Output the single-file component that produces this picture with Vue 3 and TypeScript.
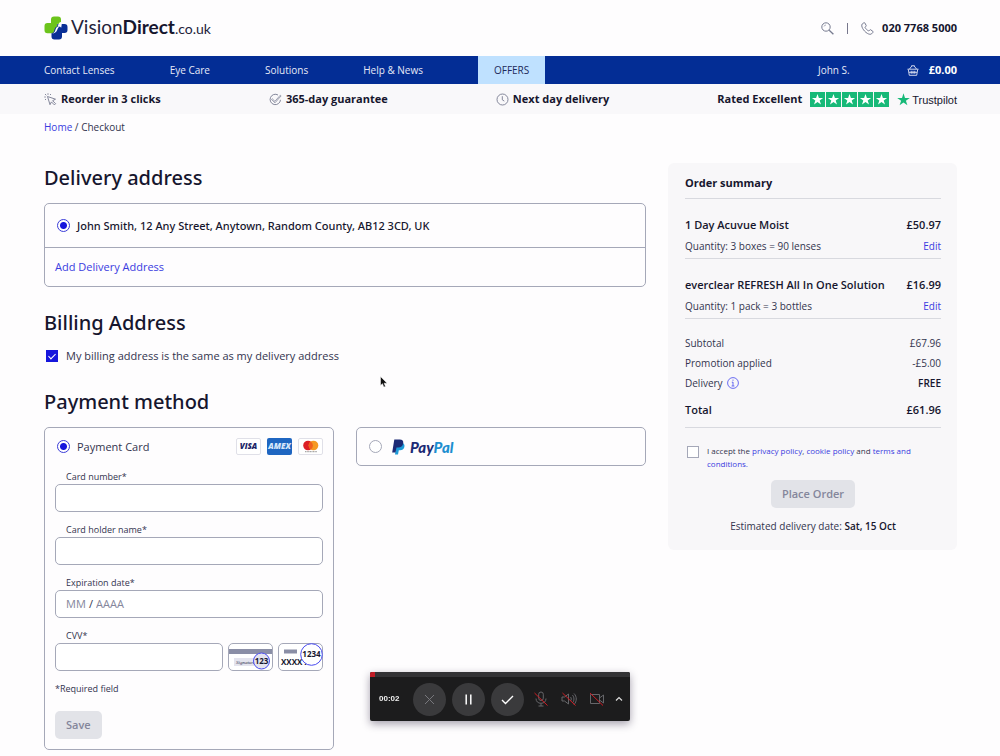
<script setup lang="ts">
import { ref } from 'vue'

interface BasketItem {
  name: string
  price: string
  quantity: string
}

const navLinks: string[] = ['Contact Lenses', 'Eye Care', 'Solutions', 'Help & News']

const items: BasketItem[] = [
  { name: '1 Day Acuvue Moist', price: '£50.97', quantity: '3 boxes = 90 lenses' },
  { name: 'everclear REFRESH All In One Solution', price: '£16.99', quantity: '1 pack = 3 bottles' },
]

const address = ref('home')
const sameAddress = ref(true)
const method = ref('card')
const accepted = ref(false)
const cardNumber = ref('')
const cardHolder = ref('')
const month = ref('')
const year = ref('')
const cvv = ref('')
</script>

<template>
  <div class="page">
    <header class="top wrap">
      <a href="#" class="logo" aria-label="VisionDirect.co.uk">
        <svg width="24" height="24" viewBox="0 0 24 24" aria-hidden="true">
          <path d="M12 8h8.500a3 3 0 0 1 3 3v3a3 3 0 0 1-3 3H18v3.500a3 3 0 0 1-3 3h-4.500a3 3 0 0 1-3-3V17z" fill="#0a2f96" />
          <path d="M7 3.500a3 3 0 0 1 3-3h4a3 3 0 0 1 3 3V6c-1.500.3-2.200 1-2.400 2.300L13 7.800l.4 2.400c-2 .6-2.800 2.200-3.200 4.500-.3 1.600-1.300 2.500-3 2.500H3.500a3 3 0 0 1-3-3V10a3 3 0 0 1 3-3H7z" fill="#6cc41c" />
          <path d="M6.500 17.700c2.900-.2 4.400-1.500 4.900-3.800.5-2.200 1.500-3.400 3.200-3.700l-1.200-1.500 4.500-1.500-.7 4.500-1.300-1.100c-1.400.4-2.200 1.700-2.700 3.400-.7 2.300-3 3.700-6.700 3.700z" fill="#fff" />
        </svg>
        <span class="logo-text">Vision<b>Direct</b><small>.co.uk</small></span>
      </a>
      <div class="contact">
        <button type="button" class="plain" aria-label="Search">
          <svg width="13" height="13" viewBox="0 0 13 13" fill="none" stroke="#777b90">
            <circle cx="5" cy="5" r="4.200" />
            <path d="M8.200 8.200l4.200 4" stroke-width="1.300" />
            <path d="M3 4.500A2 2 0 0 1 5 3" stroke-width=".6" />
          </svg>
        </button>
        <span class="rule"></span>
        <a href="#" class="phone">
          <svg width="13" height="13" viewBox="0 0 13 13" fill="none" stroke="#777b90" stroke-linejoin="round" aria-hidden="true">
            <path d="M2.800.8L1.200 2c-.8.900-.5 2.700.5 4.500s2.700 3.800 4.700 4.900c1.700 1 3.400 1.200 4.200.4l1.400-1.500c.2-.3.200-.6-.1-.9L9.700 7.800c-.3-.2-.6-.2-.9.100L7.700 9C6.200 8.300 4.700 6.800 4 5.300l1-1.100c.3-.3.300-.6.100-.9L3.700.8c-.2-.3-.6-.3-.9 0z" />
          </svg>
          020 7768 5000
        </a>
      </div>
    </header>

    <nav class="nav">
      <div class="wrap nav-row">
        <a v-for="link in navLinks" :key="link" href="#">{{ link }}</a>
        <a href="#" class="offers">OFFERS</a>
        <a href="#" class="user">John S.</a>
        <a href="#" class="basket">
          <svg width="12" height="11" viewBox="0 0 12 11" fill="none" stroke="#e3e6f5" stroke-width=".9" aria-hidden="true">
            <path d="M.5 4.200h11M1.300 4.500l1 5.800h7.400l1-5.800M2.500 4L5 .8M9.500 4L7 .8M4.300.8h3.400M4.200 5.800v3M6 5.800v3M7.800 5.800v3M2 7.300h8" />
          </svg>
          £0.00
        </a>
      </div>
    </nav>

    <div class="benefits">
      <div class="wrap benefit-row">
        <span class="benefit">
          <svg width="13" height="13" viewBox="0 0 13 13" fill="none" stroke="#777b90" stroke-width=".9" stroke-linejoin="round" aria-hidden="true">
            <path d="M3.500 3.500l8 2.700-2.900 1.500 3 3-1.200 1.200-3-3L6 11.700z" />
            <path d="M2.300 2.300L1 1M4 1.800V.3M1.800 4H.3M2 6L1 7M6 2l1-1" />
          </svg>
          Reorder in 3 clicks
        </span>
        <span class="benefit">
          <svg width="13" height="13" viewBox="0 0 13 13" fill="none" stroke="#777b90" stroke-width=".9" aria-hidden="true">
            <path d="M11.500 6.800A5.200 5.200 0 1 1 9 2" />
            <path d="M3.200 5.700l2.700 2.600 5.400-6.100.8.700L6 9.800 2.500 6.500z" stroke-width=".7" />
          </svg>
          365-day guarantee
        </span>
        <span class="benefit">
          <svg width="13" height="13" viewBox="0 0 13 13" fill="none" stroke="#777b90" stroke-width=".9" aria-hidden="true">
            <circle cx="6.500" cy="6.500" r="5.500" />
            <path d="M6.300 3.200v3.600l2 1.300" />
          </svg>
          Next day delivery
        </span>
        <span class="benefit rated">
          Rated Excellent
          <span class="stars">
            <svg v-for="n in 5" :key="n" width="15" height="15" viewBox="0 0 15 15" aria-hidden="true">
              <path d="M0 0h15v15H0z" fill="#17b978" />
              <path d="M7.500 2l1.400 4h4.200L9.700 8.500l1.300 4.100-3.500-2.500L4 12.600l1.300-4.100L1.900 6h4.200z" fill="#fff" />
            </svg>
          </span>
          <span class="trust">
            <svg width="13" height="13" viewBox="0 0 13 13" aria-hidden="true">
              <path d="M6.500.3L8 4.900h4.800L8.900 7.700l1.500 4.600-3.900-2.800-3.900 2.800 1.500-4.600L.2 4.900H5z" fill="#17b978" />
            </svg>
            <span>Trustpilot</span>
          </span>
        </span>
      </div>
    </div>

    <div class="wrap crumbs"><a href="#">Home</a> / Checkout</div>

    <main class="wrap layout">
      <div class="left">
        <h2>Delivery address</h2>
        <div class="box">
          <label class="choice address">
            <input v-model="address" type="radio" name="address" value="home" />
            John Smith, 12 Any Street, Anytown, Random County, AB12 3CD, UK
          </label>
          <div class="add"><a href="#">Add Delivery Address</a></div>
        </div>

        <h2>Billing Address</h2>
        <label class="same">
          <input v-model="sameAddress" type="checkbox" />
          My billing address is the same as my delivery address
        </label>

        <h2>Payment method</h2>
        <div class="methods">
          <div class="box">
            <div class="method-head">
              <label class="choice">
                <input v-model="method" type="radio" name="method" value="card" />
                Payment Card
              </label>
              <span class="brands">
                <svg width="25" height="17" viewBox="0 0 25 17" role="img" aria-label="Visa">
                  <rect x=".5" y=".5" width="24" height="16" rx="1.500" fill="#fff" stroke="#e0e0e8" />
                  <text x="12.500" y="11" text-anchor="middle" class="visa">VISA</text>
                </svg>
                <svg width="25" height="17" viewBox="0 0 25 17" role="img" aria-label="Amex">
                  <rect width="25" height="17" rx="2" fill="#1f66c1" />
                  <text x="12.500" y="11" text-anchor="middle" class="amex">AMEX</text>
                </svg>
                <svg width="25" height="17" viewBox="0 0 25 17" role="img" aria-label="Mastercard">
                  <rect x=".5" y=".5" width="24" height="16" rx="1.500" fill="#fff" stroke="#e0e0e8" />
                  <circle cx="10" cy="7.500" r="4.800" fill="#dc1f26" />
                  <circle cx="15.500" cy="7.500" r="4.800" fill="#f59a23" />
                  <path d="M12.750 3.500a4.800 4.800 0 0 1 0 8 4.800 4.800 0 0 1 0-8z" fill="#f0601f" />
                  <path d="M7 13.700h12" stroke="#777" stroke-width=".8" stroke-dasharray="1.200 .4" />
                </svg>
              </span>
            </div>
            <form class="card-form" @submit.prevent>
              <label for="number">Card number*</label>
              <input id="number" v-model="cardNumber" class="field" type="text" />
              <label for="holder">Card holder name*</label>
              <input id="holder" v-model="cardHolder" class="field" type="text" />
              <label for="month">Expiration date*</label>
              <div class="field expiry">
                <input id="month" v-model="month" class="month" type="text" placeholder="MM" />
                <span>/</span>
                <input v-model="year" class="year" type="text" placeholder="AAAA" aria-label="Expiration year" />
              </div>
              <label for="cvv">CVV*</label>
              <div class="cvv-row">
                <input id="cvv" v-model="cvv" class="field" type="text" />
                <svg width="45" height="28" viewBox="0 0 45 28" aria-hidden="true">
                  <rect x=".5" y=".5" width="44" height="27" rx="4.500" fill="#fff" stroke="#a5a8b8" />
                  <path d="M1 6h43v5H1z" fill="#8a8ea6" />
                  <path d="M6 15h20v8H6z" fill="#e4e4ee" />
                  <text x="8" y="21" class="sign">Signature</text>
                  <circle cx="33.500" cy="18" r="8" fill="#e4e4ee" stroke="#4a4cf0" />
                  <text x="33.500" y="21" text-anchor="middle" class="digits">123</text>
                </svg>
                <svg width="45" height="28" viewBox="0 0 45 28" aria-hidden="true">
                  <rect x=".5" y=".5" width="44" height="27" rx="4.500" fill="#fff" stroke="#a5a8b8" />
                  <path d="M6 6.500h13v4H6z" fill="#8a8ea6" />
                  <text x="3" y="22" class="digits">XXXX X</text>
                  <circle cx="33.500" cy="11.500" r="10.800" fill="#fff" stroke="#4a4cf0" />
                  <text x="33.500" y="14" text-anchor="middle" class="digits">1234</text>
                </svg>
              </div>
              <p class="required">*Required field</p>
              <button type="submit" class="btn save">Save</button>
            </form>
          </div>

          <div class="box">
            <div class="method-head">
              <label class="choice paypal">
                <input v-model="method" type="radio" name="method" value="paypal" />
                <svg width="13" height="16" viewBox="0 0 13 16" aria-hidden="true">
                  <path d="M4.500 4h6.300c1.500.9 2 2.300 1.500 4.200-.5 2-2 3-4.200 3H6.800L6 15.500H3z" fill="#1d9bd8" />
                  <path d="M2.300.5h5.400c2.700 0 4 1.500 3.500 4-.5 2.600-2.300 3.900-5 3.900H4.500l-1 5.100H.2z" fill="#1c2a75" />
                </svg>
                <span class="paypal-text">Pay<em>Pal</em></span>
              </label>
            </div>
          </div>
        </div>
      </div>

      <aside class="summary">
        <h3>Order summary</h3>
        <section v-for="item in items" :key="item.name" class="item">
          <div class="line strong"><span>{{ item.name }}</span><span>{{ item.price }}</span></div>
          <div class="line qty"><span>Quantity: {{ item.quantity }}</span><a href="#">Edit</a></div>
        </section>
        <dl class="totals">
          <div class="line"><dt>Subtotal</dt><dd>£67.96</dd></div>
          <div class="line"><dt>Promotion applied</dt><dd>-£5.00</dd></div>
          <div class="line">
            <dt class="delivery">
              Delivery
              <svg width="12" height="12" viewBox="0 0 12 12" fill="none" stroke="#5a5cf0" stroke-width=".9" aria-hidden="true">
                <circle cx="6" cy="6" r="5.400" />
                <path d="M6 5v4M4.800 5.200H6M4.600 9h2.800M6 2.600v1.200" />
              </svg>
            </dt>
            <dd class="free">FREE</dd>
          </div>
          <div class="line strong total"><dt>Total</dt><dd>£61.96</dd></div>
        </dl>
        <div class="terms">
          <input id="terms" v-model="accepted" type="checkbox" />
          <label for="terms">I accept the <a href="#">privacy policy</a>, <a href="#">cookie policy</a> and <a href="#">terms and conditions.</a></label>
        </div>
        <button type="button" class="btn order">Place Order</button>
        <p class="estimate">Estimated delivery date: <b>Sat, 15 Oct</b></p>
      </aside>
    </main>

    <svg class="cursor" width="8" height="12" viewBox="0 0 8 12" aria-hidden="true">
      <path d="M.5.500v9l2-1.800 1.300 3.400 1.700-.7-1.400-3.200h3z" fill="#111" stroke="#fff" stroke-width=".5" />
    </svg>

    <div class="recorder">
      <div class="progress"><span></span></div>
      <div class="controls">
        <span class="time">00:02</span>
        <button type="button" class="round" aria-label="Cancel">
          <svg width="13" height="13" viewBox="0 0 13 13" fill="none" stroke="#77777c"><path d="M2 2l9 9M11 2l-9 9" /></svg>
        </button>
        <button type="button" class="round" aria-label="Pause">
          <svg width="13" height="13" viewBox="0 0 13 13" stroke="#fff" stroke-width="1.500"><path d="M4.200 1.500v10M8.800 1.500v10" /></svg>
        </button>
        <button type="button" class="round" aria-label="Finish">
          <svg width="13" height="13" viewBox="0 0 13 13" fill="none" stroke="#fff" stroke-width="1.400"><path d="M1 7l3.500 3.500L12 3" /></svg>
        </button>
        <button type="button" class="plain tool mic" aria-label="Microphone">
          <svg width="16" height="16" viewBox="0 0 16 16" fill="none" stroke="#66666a">
            <rect x="5.700" y="1" width="4.600" height="8.500" rx="2.300" />
            <path d="M3 7.500c0 3 2 4.800 5 4.800s5-1.800 5-4.800M8 12.500V15M5.500 15h5" />
            <path d="M1.500 2l13 12.500" stroke="#d01c24" />
          </svg>
        </button>
        <button type="button" class="plain tool" aria-label="Sound">
          <svg width="16" height="16" viewBox="0 0 16 16" fill="none" stroke="#66666a">
            <path d="M1 6h2.500L7.500 3v10L3.500 10H1zM9.500 6c1 1 1 3 0 4M11.300 4c2.200 2 2.200 6 0 8M13 2.500c3 3 3 8 0 11" />
            <path d="M1.500 2l13 12.500" stroke="#d01c24" />
          </svg>
        </button>
        <button type="button" class="plain camera" aria-label="Camera">
          <svg width="16" height="16" viewBox="0 0 16 16" fill="none" stroke="#66666a">
            <path d="M1.500 3.500h9v9h-9zM10.500 7l4-3v8l-4-3" />
            <path d="M1 2l13 12.500" stroke="#d01c24" />
          </svg>
        </button>
        <button type="button" class="plain" aria-label="Expand">
          <svg width="8" height="8" viewBox="0 0 8 8" fill="none" stroke="#ddd" stroke-width="1.200"><path d="M1 5.500l3-3 3 3" /></svg>
        </button>
      </div>
    </div>
  </div>
</template>

<style>
body {
  margin: 0;
  background: #fefdfe;
}
</style>

<style scoped>
* {
  box-sizing: border-box;
}
.page {
  position: relative;
  font-family: "Open Sans", "Noto Sans", sans-serif;
  font-size: 11px;
  line-height: 16px;
  color: #33344e;
}
.wrap {
  padding: 0 43px 0 44px;
}
a {
  color: #3a3ce0;
  text-decoration: none;
}
input,
button {
  font: inherit;
  margin: 0;
}
h2,
h3,
p,
dl,
dd {
  margin: 0;
}
svg {
  display: block;
  flex: none;
}
.plain {
  padding: 0;
  border: 0;
  background: none;
}
.top {
  display: flex;
  align-items: center;
  justify-content: space-between;
  height: 56px;
}
.logo {
  display: flex;
  align-items: center;
  gap: 3px;
  color: #23233a;
}
.logo-text {
  font-family: Lato, sans-serif;
  font-size: 19px;
  line-height: 24px;
}
.logo-text b {
  color: #16162e;
}
.logo-text small {
  font-size: 14px;
}
.contact {
  display: flex;
  align-items: center;
  gap: 13px;
}
.rule {
  width: 1px;
  height: 11px;
  background: #77778c;
}
.phone {
  display: flex;
  align-items: center;
  gap: 8px;
  font-weight: 700;
  color: #16162e;
}
.nav {
  background: #032d95;
}
.nav-row {
  display: flex;
  align-items: center;
  gap: 55px;
  height: 28px;
  font-size: 10px;
}
.nav a {
  color: #e6e9f7;
}
.nav .offers {
  padding: 0 16px;
  line-height: 28px;
  background: #bfe1ff;
  color: #1d2a5a;
}
.user {
  margin-left: auto;
}
.nav .basket {
  display: flex;
  align-items: center;
  gap: 10px;
  margin-left: 2px;
  font-size: 11px;
  font-weight: 700;
  color: #fff;
}
.benefits {
  background: #f9f8fa;
}
.benefit-row {
  display: flex;
  align-items: center;
  justify-content: space-between;
  height: 30px;
  font-weight: 700;
  color: #16162e;
}
.benefit {
  display: flex;
  align-items: center;
  gap: 4px;
}
.rated {
  gap: 8px;
}
.stars {
  display: flex;
  gap: 1px;
}
.trust {
  display: flex;
  align-items: center;
  gap: 2px;
  font: 11px/14px "Liberation Sans", Arial, sans-serif;
}
.trust span {
  padding-top: 2px;
}
.crumbs {
  padding-top: 5px;
  font-size: 10px;
}
.layout {
  display: grid;
  grid-template-columns: 602fr 289fr;
  gap: 22px;
  align-items: start;
  padding-top: 28px;
}
h2 {
  margin-bottom: 11px;
  font-family: "Noto Sans", "Open Sans", sans-serif;
  font-size: 20px;
  line-height: 28px;
  font-weight: 500;
  color: #16162e;
}
.left {
  padding-top: 1px;
}
.box {
  border: 1px solid #a5a8b8;
  border-radius: 5px;
}
.box + h2 {
  margin-top: 22px;
}
.choice {
  display: flex;
  align-items: center;
  gap: 7px;
  padding-left: 2px;
}
.address {
  height: 44px;
  padding-left: 12px;
  border-bottom: 1px solid #a5a8b8;
  font-family: "Noto Sans", "Open Sans", sans-serif;
  font-weight: 500;
  color: #16162e;
}
.add {
  padding: 11px 10px;
}
input[type="radio"] {
  appearance: none;
  flex: none;
  width: 13px;
  height: 13px;
  border: 1px solid #a5a8b8;
  border-radius: 50%;
  background: #fff;
}
input[type="radio"]:checked {
  border-color: #3a3cd8;
  background: radial-gradient(circle, #1616dc 3px, #fff 4px);
}
input[type="checkbox"] {
  appearance: none;
  flex: none;
  width: 12px;
  height: 12px;
  border: 1px solid #a5a8b8;
  background: #fff;
}
input[type="checkbox"]:checked {
  border-color: #1616dc;
  background: #1616dc;
}
.same {
  display: flex;
  align-items: center;
  gap: 8px;
  margin-bottom: 24px;
  padding-left: 2px;
}
.same input {
  display: grid;
  place-items: center;
}
.same input:checked::after {
  content: "";
  width: 3px;
  height: 6px;
  margin-bottom: 2px;
  border: solid #fff;
  border-width: 0 1px 1px 0;
  transform: rotate(45deg);
}
.methods {
  display: grid;
  grid-template-columns: 1fr 1fr;
  gap: 22px;
  align-items: start;
}
.method-head {
  display: flex;
  align-items: center;
  justify-content: space-between;
  height: 37px;
  padding: 0 10px;
}
.brands {
  display: flex;
  gap: 6px;
}
.visa {
  font: italic 800 8px "Open Sans", sans-serif;
  fill: #1a1f66;
}
.amex {
  font: italic 800 8px "Open Sans", sans-serif;
  fill: #d7e6fa;
}
.card-form {
  padding: 6px 10px 10px;
}
.card-form label {
  display: block;
  margin-bottom: 1px;
  padding-left: 11px;
  font-size: 9px;
  line-height: 12px;
}
.field {
  display: block;
  width: 100%;
  height: 28px;
  margin-bottom: 12px;
  padding: 0 10px;
  border: 1px solid #a5a8b8;
  border-radius: 5px;
  background: #fff;
}
.expiry {
  display: flex;
  align-items: center;
  gap: 3px;
}
.expiry input {
  padding: 0;
  border: 0;
  background: none;
  color: #33344e;
}
.expiry input::placeholder {
  color: #84869b;
}
.month {
  width: 20px;
}
.year {
  flex: 1;
  min-width: 0;
}
.cvv-row {
  display: flex;
  gap: 5px;
}
.cvv-row .field {
  flex: 1;
  min-width: 0;
}
.digits {
  font: 700 8px "Open Sans", sans-serif;
  fill: #16162e;
}
.sign {
  font: italic 5px "Liberation Serif", serif;
  fill: #33344e;
}
.required {
  margin-bottom: 16px;
  font-size: 9px;
  line-height: 12px;
}
.btn {
  display: block;
  height: 28px;
  padding: 0 11px;
  border: 0;
  border-radius: 5px;
  background: #e2e3e8;
  font-weight: 600;
  color: #84869b;
}
.paypal svg {
  margin-left: 3px;
}
.paypal-text {
  margin-left: -2px;
  font: italic 900 15px/16px Lato, sans-serif;
  color: #1c2a75;
}
.paypal-text em {
  color: #1d8fd0;
}
.summary {
  padding: 12px 16px 16px 17px;
  border-radius: 6px;
  background: #f8f7f9;
}
h3 {
  padding-bottom: 7px;
  border-bottom: 1px solid #d8d9df;
  font-size: 11px;
  line-height: 16px;
  font-weight: 700;
  color: #16162e;
}
.line {
  display: flex;
  justify-content: space-between;
}
.strong {
  font-size: 11px;
  font-weight: 600;
  color: #16162e;
}
.item {
  padding: 18px 0 4px;
  border-bottom: 1px solid #d8d9df;
}
.qty {
  margin-top: 5px;
  font-size: 10px;
}
.totals {
  display: grid;
  gap: 4px;
  padding: 16px 0 9px;
  border-bottom: 1px solid #d8d9df;
  font-size: 10px;
}
.total {
  padding-top: 7px;
}
.delivery {
  display: flex;
  align-items: center;
  gap: 4px;
}
.free {
  font-weight: 600;
  color: #16162e;
}
.terms {
  display: flex;
  gap: 8px;
  padding: 16px 0 10px 2px;
  font-size: 8px;
  line-height: 13px;
}
.terms input {
  margin-top: 2px;
}
.order {
  margin: 0 auto;
}
.estimate {
  margin-top: 10px;
  font-size: 10px;
  text-align: center;
}
.estimate b {
  font-weight: 600;
  color: #16162e;
}
.cursor {
  position: absolute;
  left: 380px;
  top: 376px;
}
.recorder {
  position: fixed;
  left: 37%;
  bottom: 35px;
  overflow: hidden;
  border-radius: 2px;
  background: #1c1c1d;
  box-shadow: 0 3px 9px rgba(30, 20, 50, 0.4);
}
.progress {
  height: 5px;
  background: #333335;
}
.progress span {
  display: block;
  width: 5px;
  height: 5px;
  background: #c01c26;
}
.controls {
  display: flex;
  align-items: center;
  gap: 6px;
  height: 44px;
  padding: 0 7px 0 9px;
}
.time {
  width: 28px;
  font: 700 8px/12px "Liberation Sans", Arial, sans-serif;
  color: #eee;
}
.round {
  display: grid;
  place-items: center;
  width: 33px;
  height: 33px;
  padding: 0;
  border: 0;
  border-radius: 50%;
  background: #3a3a3c;
}
.tool {
  margin-right: 6px;
}
.camera {
  margin-right: 4px;
}
.mic {
  margin-left: 3px;
}
</style>
